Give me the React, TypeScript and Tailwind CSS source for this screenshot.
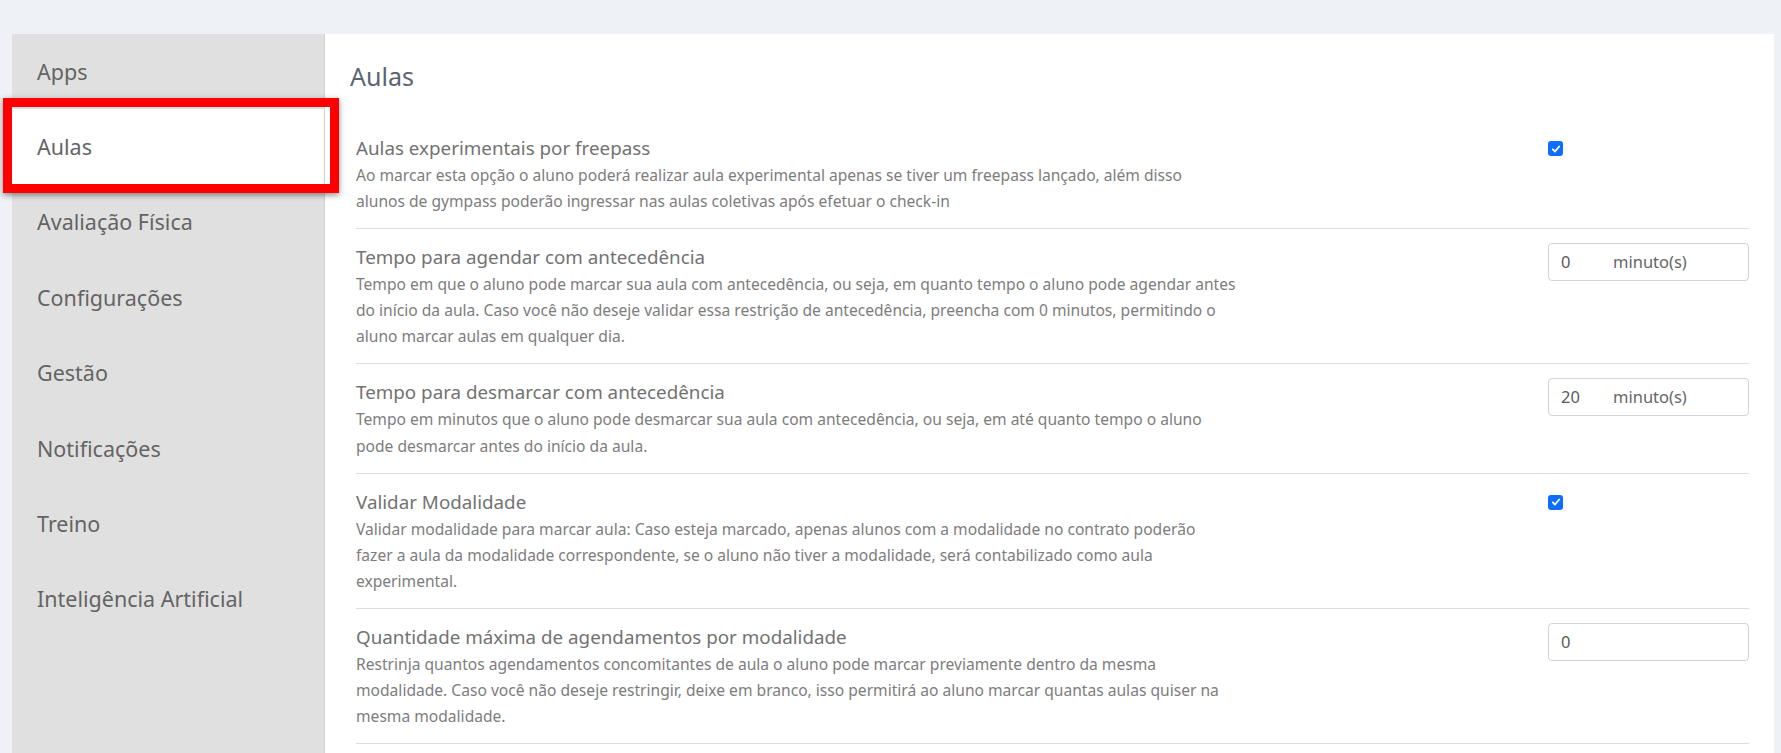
import React from 'react';

type Row = {
  title: string;
  lines: string[];
  control: 'check' | 'minutes' | 'number';
  value?: string;
};

const menu = [
  'Apps',
  'Aulas',
  'Avaliação Física',
  'Configurações',
  'Gestão',
  'Notificações',
  'Treino',
  'Inteligência Artificial',
];

const rows: Row[] = [
  {
    title: 'Aulas experimentais por freepass',
    lines: [
      'Ao marcar esta opção o aluno poderá realizar aula experimental apenas se tiver um freepass lançado, além disso',
      'alunos de gympass poderão ingressar nas aulas coletivas após efetuar o check-in',
    ],
    control: 'check',
  },
  {
    title: 'Tempo para agendar com antecedência',
    lines: [
      'Tempo em que o aluno pode marcar sua aula com antecedência, ou seja, em quanto tempo o aluno pode agendar antes',
      'do início da aula. Caso você não deseje validar essa restrição de antecedência, preencha com 0 minutos, permitindo o',
      'aluno marcar aulas em qualquer dia.',
    ],
    control: 'minutes',
    value: '0',
  },
  {
    title: 'Tempo para desmarcar com antecedência',
    lines: [
      'Tempo em minutos que o aluno pode desmarcar sua aula com antecedência, ou seja, em até quanto tempo o aluno',
      'pode desmarcar antes do início da aula.',
    ],
    control: 'minutes',
    value: '20',
  },
  {
    title: 'Validar Modalidade',
    lines: [
      'Validar modalidade para marcar aula: Caso esteja marcado, apenas alunos com a modalidade no contrato poderão',
      'fazer a aula da modalidade correspondente, se o aluno não tiver a modalidade, será contabilizado como aula',
      'experimental.',
    ],
    control: 'check',
  },
  {
    title: 'Quantidade máxima de agendamentos por modalidade',
    lines: [
      'Restrinja quantos agendamentos concomitantes de aula o aluno pode marcar previamente dentro da mesma',
      'modalidade. Caso você não deseje restringir, deixe em branco, isso permitirá ao aluno marcar quantas aulas quiser na',
      'mesma modalidade.',
    ],
    control: 'number',
    value: '0',
  },
];

const Checkbox: React.FC = () => (
  <div className="mt-[7px] w-[15px] h-[15px] rounded-[3px] bg-[#0d6efd] flex items-center justify-center">
    <svg viewBox="0 0 12 12" className="w-[10px] h-[10px]" fill="none" stroke="white" strokeWidth="2.2" strokeLinecap="round" strokeLinejoin="round">
      <path d="M2.2 6.4 4.8 9 9.8 3" />
    </svg>
  </div>
);

const App: React.FC = () => {
  return (
    <div className="relative h-[753px] overflow-hidden bg-[#eef1f6] pt-[34px] pl-[12px] pr-[7px] flex font-['Noto_Sans',sans-serif]">
      {/* Sidebar */}
      <div className="w-[313px] shrink-0 bg-[#e0e0e0] border-r border-[#d2d2d2]">
        {menu.map((item, i) => (
          <div
            key={item}
            className={`h-[75.4px] flex items-center pl-[25px] text-[21.5px] text-[#646464] ${i === 1 ? 'bg-white' : ''}`}
          >
            {item}
          </div>
        ))}
      </div>

      {/* Main panel */}
      <div className="flex-1 bg-white pl-[25px] pr-[25px]">
        <h2 className="mt-[27px] mb-[28px] text-[25px] leading-[31px] text-[#5b6470]">Aulas</h2>
        <div className="ml-[6px]">
          {rows.map((row) => (
            <div key={row.title} className="flex border-b border-[#dcdcdc] pt-[14px] pb-[14px]">
              <div className="flex-1">
                <div className="text-[18.8px] leading-[28px] text-[#727272]">{row.title}</div>
                <div className="text-[15.6px] leading-[26.1px] text-[#7d7d7d]">
                  {row.lines.map((l) => (
                    <div key={l} className="whitespace-nowrap">{l}</div>
                  ))}
                </div>
              </div>
              <div className="w-[201px] shrink-0">
                {row.control === 'check' && <Checkbox />}
                {row.control !== 'check' && (
                  <div className="h-[38px] border border-[#ced4da] rounded-[4px] flex items-center pl-[12px] text-[16.5px] text-[#5a5a5a]">
                    <span className="w-[52px]">{row.value}</span>
                    {row.control === 'minutes' && <span className="text-[#666]">minuto(s)</span>}
                  </div>
                )}
              </div>
            </div>
          ))}
        </div>
      </div>

      {/* Annotation highlight */}
      <div className="absolute left-[3px] top-[98px] w-[336px] h-[95px] border-[9px] border-[#ff0000] shadow-[0_2px_6px_rgba(0,0,0,0.45)]" />
    </div>
  );
};

export default App;
